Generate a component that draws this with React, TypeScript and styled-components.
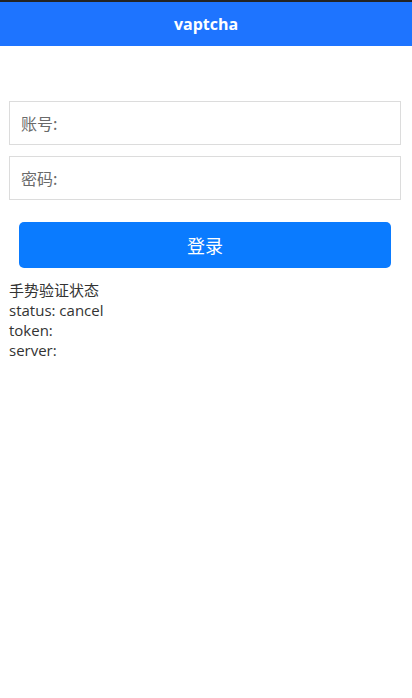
import styled, { createGlobalStyle } from 'styled-components';

const GlobalStyle = createGlobalStyle`
  body {
    margin: 0;
    background: #fff;
    font-family: "Noto Sans CJK SC", "Open Sans", sans-serif;
  }
`;

const Page = styled.div`
  width: 412px;
  min-height: 698px;
  display: flex;
  flex-direction: column;
`;

const Header = styled.header`
  height: 44px;
  border-top: 2px solid #232323;
  background: #1e74ff;
  display: flex;
  align-items: center;
  justify-content: center;
`;

const Title = styled.h1`
  margin: 0;
  color: #fff;
  font-family: "Open Sans", "Noto Sans", sans-serif;
  font-size: 16px;
  font-weight: 700;
`;

const Form = styled.form`
  margin-top: 55px;
  padding: 0 11px 0 9px;
  display: flex;
  flex-direction: column;
  gap: 11px;
`;

const Input = styled.input`
  box-sizing: border-box;
  width: 100%;
  height: 44px;
  padding: 0 11px;
  border: 1px solid #dcdcdc;
  border-radius: 0;
  outline: none;
  font-family: "Noto Sans CJK SC", sans-serif;
  font-size: 16px;
  color: #333;
  &::placeholder {
    color: #6a6a6a;
  }
`;

const Button = styled.button`
  margin: 11px 10px 0 10px;
  height: 46px;
  border: none;
  border-radius: 5px;
  background: #0a7bff;
  color: #fff;
  font-family: "Noto Sans CJK SC", sans-serif;
  font-size: 18px;
  cursor: pointer;
`;

const Status = styled.div`
  margin-top: 12px;
  padding: 0 9px;
  color: #333;
  font-family: "Open Sans", "Noto Sans CJK SC", sans-serif;
  font-size: 15px;
  line-height: 20px;
`;

export default function App() {
  return (
    <Page>
      <GlobalStyle />
      <Header>
        <Title>vaptcha</Title>
      </Header>
      <Form onSubmit={(e) => e.preventDefault()}>
        <Input type='text' placeholder='账号:' />
        <Input type='password' placeholder='密码:' />
        <Button type='submit'>登录</Button>
      </Form>
      <Status>
        <div>手势验证状态</div>
        <div>status: cancel</div>
        <div>token: </div>
        <div>server: </div>
      </Status>
    </Page>
  );
}
